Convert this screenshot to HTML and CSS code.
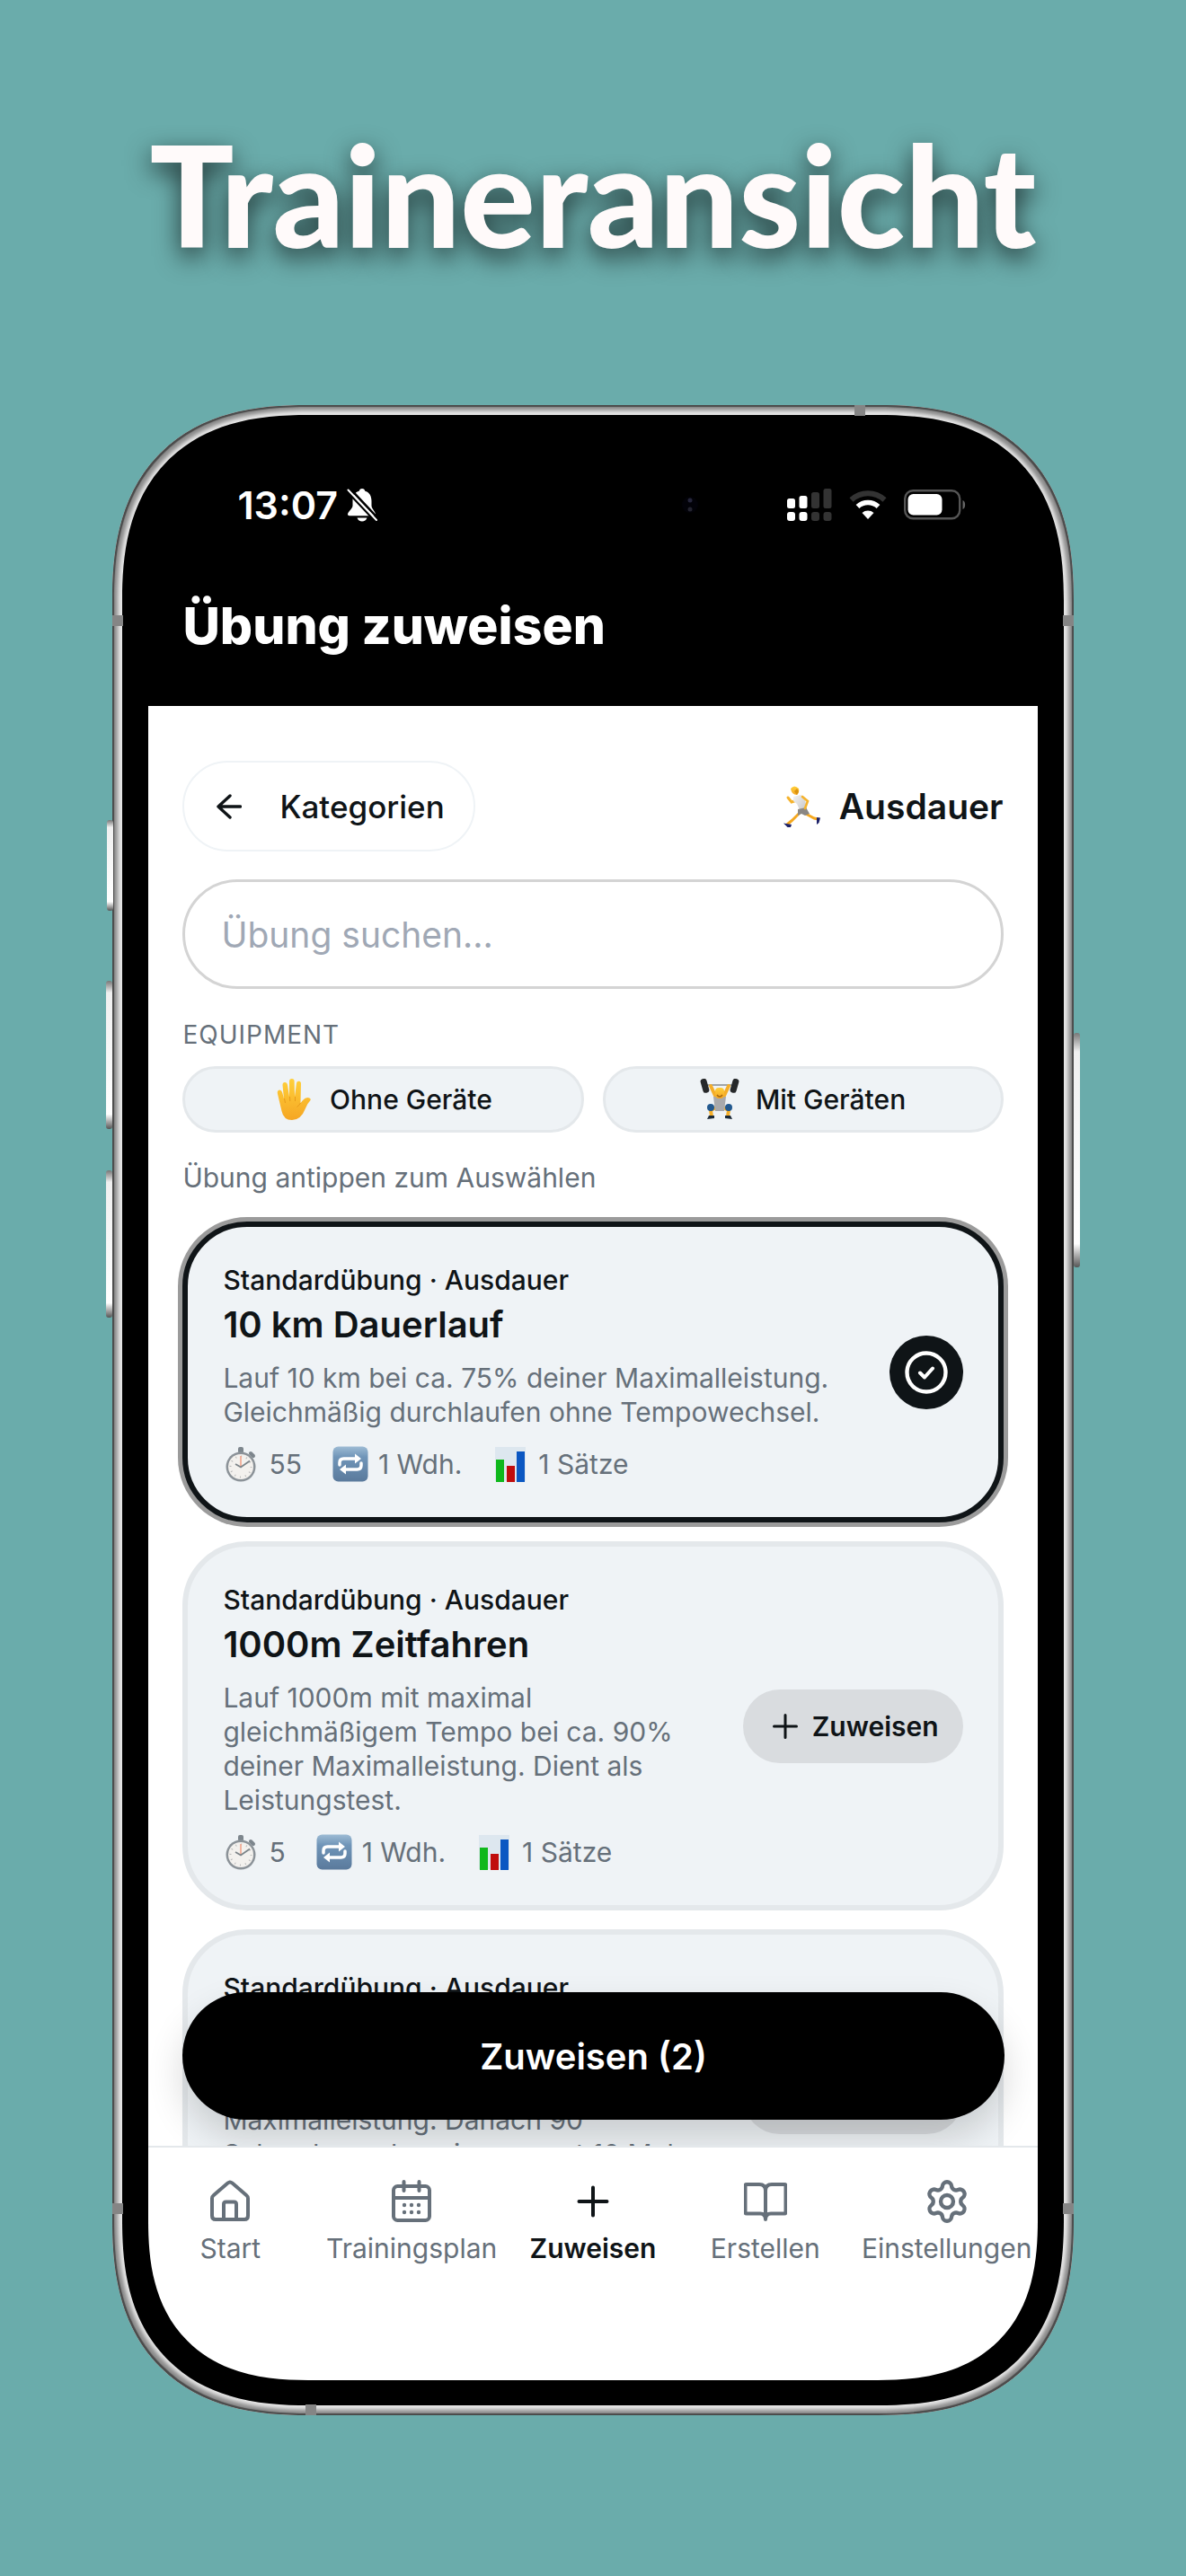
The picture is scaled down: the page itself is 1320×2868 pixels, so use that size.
FILE: index.html
```html
<!DOCTYPE html>
<html lang="de">
<head>
    <meta charset="UTF-8">
    <meta name="viewport" content="width=device-width, initial-scale=1.0">
    <title>Traineransicht</title>
    <link rel="stylesheet" href="styles.css">
</head>
<body>
    <!-- shared icons -->
    <svg class="sprite" aria-hidden="true">
        <defs>
            <linearGradient id="skin" x1="0" y1="0" x2="0" y2="1">
                <stop offset="0" stop-color="#ffd03a"/>
                <stop offset="1" stop-color="#f5a623"/>
            </linearGradient>
            <linearGradient id="blueTile" x1="0" y1="0" x2="0" y2="1">
                <stop offset="0" stop-color="#9dbbd4"/>
                <stop offset="0.3" stop-color="#7095b8"/>
                <stop offset="1" stop-color="#5a7a9c"/>
            </linearGradient>
            <linearGradient id="shirt" x1="0" y1="0" x2="1" y2="1">
                <stop offset="0" stop-color="#f2f2f2"/>
                <stop offset="1" stop-color="#c4c4c6"/>
            </linearGradient>
        </defs>
        <symbol id="stopwatch" viewBox="0 0 40 40">
            <rect x="17" y="1" width="6" height="7" rx="2" fill="#7d868d"/>
            <path d="M31 8l3 3" stroke="#7d868d" stroke-width="4" stroke-linecap="round"/>
            <circle cx="20" cy="23" r="16.5" fill="#8b9298"/>
            <circle cx="20" cy="23" r="14" fill="#f3f1ee"/>
            <circle cx="20" cy="23" r="11.5" fill="none" stroke="#b9b9b9" stroke-width="2" stroke-dasharray="1 5"/>
            <path d="M20 24V11" stroke="#f0a58c" stroke-width="1.6"/>
            <path d="M14 20l6 3.500 10-7" fill="none" stroke="#7c8488" stroke-width="1.800"/>
        </symbol>
        <symbol id="repeat" viewBox="0 0 40 40">
            <rect x="0.500" y="0.500" width="39" height="39" rx="6" fill="url(#blueTile)"/>
            <path d="M8 21v-2.500q0-4.500 4.500-4.500H27" fill="none" stroke="#fff" stroke-width="3.500" stroke-linecap="round"/>
            <path d="M32 19v2.500q0 4.500-4.500 4.500H13" fill="none" stroke="#fff" stroke-width="3.500" stroke-linecap="round"/>
            <path d="M25 8.500l7 5.500-7 5.500zM15 20.500L8 26l7 5.500z" fill="#fff"/>
        </symbol>
        <symbol id="chart" viewBox="0 0 40 40">
            <rect x="3" y="1" width="34" height="38" fill="#dde7ef"/>
            <rect x="4" y="15" width="9" height="25" fill="#0fb81c"/>
            <rect x="16" y="22" width="9" height="18" fill="#c00d0d"/>
            <rect x="27" y="6" width="9" height="34" fill="#0b57c2"/>
        </symbol>
        <symbol id="plus" viewBox="0 0 24 24">
            <path d="M12 4.500v15M4.500 12h15" fill="none" stroke="currentColor" stroke-width="1.800" stroke-linecap="round"/>
        </symbol>
    </svg>

    <h1 class="headline">Traineransicht</h1>

    <div class="phone">
        <span class="side-button action"></span>
        <span class="side-button volume-up"></span>
        <span class="side-button volume-down"></span>
        <span class="side-button power"></span>
        <span class="antenna top"></span>
        <span class="antenna bottom"></span>
        <span class="antenna left-upper"></span>
        <span class="antenna left-lower"></span>
        <span class="antenna right-upper"></span>
        <span class="antenna right-lower"></span>

        <div class="bezel">
            <div class="screen">
                <div class="status-bar">
                    <div class="status-left">
                        <span class="time">13:07</span>
                        <svg class="bell" viewBox="0 0 34 38">
                            <path d="M17 1c-2 0-3 1.200-3 2.500C9 5 6.500 9 6.500 15v5c0 3-5.500 7-5.500 9.500 0 1 .8 1.700 2 1.700h27c1.200 0 2-.7 2-1.700 0-2.500-4.500-6.500-4.500-9.500v-5c0-6-2.500-10-7.500-11.500C20 2.200 19 1 17 1zM11.500 33.500c.8 2.500 3 4 5.500 4s4.700-1.500 5.500-4z" fill="#fff"/>
                            <path d="M3.500 1L35 34.500M0 3.500L31.500 37" stroke="#000" stroke-width="2.600"/>
                            <path d="M1.500 2.500L33 36" stroke="#fff" stroke-width="2" stroke-linecap="round"/>
                        </svg>
                    </div>
                    <div class="status-right">
                        <svg class="camera" viewBox="0 0 20 30">
                            <circle cx="10" cy="15" r="9" fill="#020208"/>
                            <circle cx="10" cy="10" r="2.500" fill="#25253a"/>
                            <circle cx="10" cy="20" r="2.500" fill="#23232f"/>
                        </svg>
                        <svg class="signal" viewBox="0 0 50 36">
                            <g fill="#fff">
                                <rect x="0" y="11" width="9" height="11" rx="2.500"/>
                                <rect x="13.500" y="8" width="9" height="14" rx="2.500"/>
                                <rect x="0" y="26" width="9" height="10" rx="3"/>
                                <rect x="13.500" y="26" width="9" height="10" rx="3"/>
                            </g>
                            <g fill="#333">
                                <rect x="27" y="4" width="9" height="18" rx="2.500"/>
                                <rect x="40.500" y="0" width="9" height="22" rx="2.500"/>
                                <rect x="27" y="26" width="9" height="10" rx="3"/>
                                <rect x="40.500" y="26" width="9" height="10" rx="3"/>
                            </g>
                        </svg>
                        <svg class="wifi" viewBox="0 0 42 32">
                            <path d="M2.500 10.500a27 27 0 0 1 37 0" fill="none" stroke="#333" stroke-width="6"/>
                            <path d="M9.500 18a17 17 0 0 1 23 0" fill="none" stroke="#fff" stroke-width="5.500"/>
                            <path d="M21 32l-6.500-7a10 10 0 0 1 13 0z" fill="#fff"/>
                        </svg>
                        <svg class="battery" viewBox="0 0 70 34">
                            <rect x="1.200" y="1.200" width="61" height="31" rx="9" fill="none" stroke="#555" stroke-width="2.400"/>
                            <rect x="4.500" y="5" width="38" height="23.500" rx="6" fill="#fff"/>
                            <path d="M65.500 12c3.500 1 3.500 9 0 10z" fill="#666"/>
                        </svg>
                    </div>
                </div>

                <header class="app-header">
                    <h2>Übung zuweisen</h2>
                </header>

                <main class="content">
                    <div class="category-row">
                        <button class="back-button" type="button">
                            <svg class="arrow" viewBox="0 0 28 28">
                                <path d="M15 2L2 14l13 12M2 14h24.500" fill="none" stroke="currentColor" stroke-width="3.400" stroke-linecap="round" stroke-linejoin="round"/>
                            </svg>
                            Kategorien
                        </button>
                        <div class="category">
                            <svg class="runner" viewBox="0 0 42 46">
                                <path d="M19 30l-8 8-6 5M24 30l11 6 5 1" fill="none" stroke="#f5a81f" stroke-width="3" stroke-linejoin="round"/>
                                <path d="M13 17l-3 1-4-5" fill="none" stroke="#f5b32d" stroke-width="3" stroke-linecap="round"/>
                                <path d="M12 12l8-2q5 3 6 10l1 8-7 1-4-9-4-3z" fill="url(#shirt)"/>
                                <path d="M17 26l9-2 4 7-5 2-4-2-4 2z" fill="#8a8784"/>
                                <path d="M22 12l6 5-3 8" fill="none" stroke="#f5b32d" stroke-width="2.600" stroke-linecap="round"/>
                                <path d="M9 3q4-5 9 0 1 5-2 7-6 0-7-7z" fill="url(#skin)"/>
                                <path d="M13 6l3-3 2 3-2 4z" fill="#d9920f"/>
                                <path d="M1 41.500l9 1.500-1 3H5.500z" fill="#1d2269"/>
                                <path d="M38 35l4 .5-1.500 5.500-2.500 2z" fill="#1d2269"/>
                            </svg>
                            <span>Ausdauer</span>
                        </div>
                    </div>

                    <input class="search" type="text" placeholder="Übung suchen..." aria-label="Übung suchen">

                    <p class="section-label">Equipment</p>

                    <div class="chips">
                        <button class="chip" type="button">
                            <svg class="emoji" viewBox="0 0 44 46">
                                <path d="M4 17q-1-4 2-4.500 2.500 0 3.500 4l1.500 6L9.500 7q0-3 2.500-3t3 3l2 13V3q0-3 2.800-3t2.800 3l.4 17L25 5q.3-2.500 2.700-2.300 2.500.3 2.300 3L29.500 27q1-1 2.500-3 3.500-4 7.500-2.500 2 1 1 2.500-3 3-5.500 9-5 13-15 13-9.500 0-11.500-10z" fill="url(#skin)"/>
                                <path d="M11.500 22l1 5M17.500 20l.3 5M23.500 20v5M29.500 27q-1.500 2.500-4 4.500" fill="none" stroke="#e79a1c" stroke-width="1"/>
                            </svg>
                            Ohne Geräte
                        </button>
                        <button class="chip" type="button">
                            <svg class="emoji" viewBox="0 0 44 46">
                                <path d="M6 7h32" stroke="#a0a5a8" stroke-width="2"/>
                                <path d="M12 8l6 13M32 8l-6 13" stroke="#f5ae28" stroke-width="4" stroke-linecap="round"/>
                                <rect x="2" y="0" width="7" height="16" rx="3" transform="rotate(-16 5 8)" fill="#26282a"/>
                                <rect x="35" y="0" width="7" height="16" rx="3" transform="rotate(16 39 8)" fill="#26282a"/>
                                <path d="M18 32l-6 3 1 7M26 32l6 3-1 7" fill="none" stroke="#f5ae28" stroke-width="4"/>
                                <path d="M15 20h14l-2 16H17z" fill="#a9a9ab"/>
                                <rect x="17" y="10" width="10" height="12" rx="4" fill="url(#skin)"/>
                                <path d="M19 18q3 4 6 0" fill="none" stroke="#a8690c" stroke-width="1.500"/>
                                <circle cx="12" cy="32" r="4" fill="#23598f"/>
                                <circle cx="32" cy="32" r="4" fill="#23598f"/>
                                <path d="M8 45l2-4h6v3zM36 45l-2-4h-6v3z" fill="#1c2a38"/>
                            </svg>
                            Mit Geräten
                        </button>
                    </div>

                    <p class="hint">Übung antippen zum Auswählen</p>

                    <div class="exercise-list">
                        <article class="card selected">
                            <div class="card-body">
                                <p class="card-type">Standardübung · Ausdauer</p>
                                <h3>10 km Dauerlauf</h3>
                                <p class="card-text">Lauf 10 km bei ca. 75% deiner Maximalleistung. Gleichmäßig durchlaufen ohne Tempowechsel.</p>
                                <div class="meta">
                                    <span><svg><use href="#stopwatch"/></svg>55</span>
                                    <span><svg><use href="#repeat"/></svg>1 Wdh.</span>
                                    <span><svg><use href="#chart"/></svg>1 Sätze</span>
                                </div>
                            </div>
                            <button class="check" type="button" aria-label="Ausgewählt">
                                <svg viewBox="0 0 48 48">
                                    <circle cx="24" cy="24" r="21.500" fill="none" stroke="#fff" stroke-width="4.400"/>
                                    <path d="M17 24.500l5 5 9-10" fill="none" stroke="#fff" stroke-width="4" stroke-linecap="round" stroke-linejoin="round"/>
                                </svg>
                            </button>
                        </article>

                        <article class="card">
                            <div class="card-body">
                                <p class="card-type">Standardübung · Ausdauer</p>
                                <h3>1000m Zeitfahren</h3>
                                <p class="card-text">Lauf 1000m mit maximal gleichmäßigem Tempo bei ca. 90% deiner Maximalleistung. Dient als Leistungstest.</p>
                                <div class="meta">
                                    <span><svg><use href="#stopwatch"/></svg>5</span>
                                    <span><svg><use href="#repeat"/></svg>1 Wdh.</span>
                                    <span><svg><use href="#chart"/></svg>1 Sätze</span>
                                </div>
                            </div>
                            <button class="assign" type="button"><svg><use href="#plus"/></svg>Zuweisen</button>
                        </article>

                        <article class="card">
                            <div class="card-body">
                                <p class="card-type">Standardübung · Ausdauer</p>
                                <h3>Intervalllauf</h3>
                                <p class="card-text">Lauf 30 Sekunden mit 90%<br>Maximalleistung. Danach 90<br>Sekunden gehen, insgesamt 10 Mal</p>
                                <div class="meta">
                                    <span><svg><use href="#stopwatch"/></svg>20</span>
                                    <span><svg><use href="#repeat"/></svg>10 Wdh.</span>
                                    <span><svg><use href="#chart"/></svg>1 Sätze</span>
                                </div>
                            </div>
                            <button class="assign" type="button"><svg><use href="#plus"/></svg>Zuweisen</button>
                        </article>
                    </div>

                    <button class="submit" type="button">Zuweisen (2)</button>
                </main>

                <nav class="tab-bar">
                    <a href="#">
                        <svg viewBox="0 0 48 48">
                            <path d="M4 20.500q0-2 1.600-3.300L21.500 3.500q2.500-2 5 0l15.900 13.700Q44 18.500 44 20.500V40q0 4-4 4H8q-4 0-4-4z"/>
                            <path d="M17 44V27q0-2.500 2.500-2.500h9q2.500 0 2.500 2.500v17"/>
                        </svg>
                        Start
                    </a>
                    <a href="#">
                        <svg viewBox="0 0 48 48">
                            <rect x="4" y="7" width="40" height="38" rx="4.500"/>
                            <path d="M4 20h40M15.500 2v10M32.500 2v10"/>
                            <g class="dots"><circle cx="16" cy="28" r="2.200"/><circle cx="24" cy="28" r="2.200"/><circle cx="32" cy="28" r="2.200"/><circle cx="16" cy="36" r="2.200"/><circle cx="24" cy="36" r="2.200"/><circle cx="32" cy="36" r="2.200"/></g>
                        </svg>
                        Trainingsplan
                    </a>
                    <a href="#" class="active">
                        <svg viewBox="0 0 48 48">
                            <path d="M24 8.500v31M8.500 24h31"/>
                        </svg>
                        Zuweisen
                    </a>
                    <a href="#">
                        <svg viewBox="0 0 48 48">
                            <path d="M24 12q0-7 7-7h14q1.500 0 1.500 1.500V36q0 1.500-1.500 1.500H30q-6 0-6 6.500 0-6.500-6-6.500H3Q1.500 37.500 1.500 36V6.500Q1.500 5 3 5h14q7 0 7 7zM24 12v32"/>
                        </svg>
                        Erstellen
                    </a>
                    <a href="#">
                        <svg viewBox="1 1 22 22" class="gear">
                            <path d="M9.671 4.136a2.340 2.340 0 0 1 4.659 0 2.340 2.340 0 0 0 3.319 1.915 2.340 2.340 0 0 1 2.330 4.033 2.340 2.340 0 0 0 0 3.831 2.340 2.340 0 0 1-2.330 4.033 2.340 2.340 0 0 0-3.319 1.915 2.340 2.340 0 0 1-4.659 0 2.340 2.340 0 0 0-3.320-1.915 2.340 2.340 0 0 1-2.330-4.033 2.340 2.340 0 0 0 0-3.831A2.340 2.340 0 0 1 6.350 6.051a2.340 2.340 0 0 0 3.319-1.915"/>
                            <circle cx="12" cy="12" r="3.200"/>
                        </svg>
                        Einstellungen
                    </a>
                </nav>
            </div>
        </div>
    </div>
</body>
</html>
```
FILE: styles.css
```css
* {
    box-sizing: border-box;
}
body {
    margin: 0;
    background-color: #6aacab;
    font-family: Inter, "Liberation Sans", sans-serif;
    color: #0f1417;
}
h1, h2, h3, p {
    margin: 0;
}
svg {
    display: block;
    flex-shrink: 0;
}
button {
    font-family: inherit;
    color: inherit;
    border: none;
    cursor: pointer;
}
.sprite {
    position: absolute;
    width: 0;
    height: 0;
}
.headline {
    padding-top: 126px;
    font-family: Lato, sans-serif;
    font-size: 156px;
    font-weight: 900;
    line-height: 180px;
    text-align: center;
    color: #fffafa;
    text-shadow: 0 10px 28px rgba(0, 0, 0, 0.7);
}

/* phone body */
.phone {
    position: relative;
    width: 81%;
    aspect-ratio: 1069 / 2238;
    margin: 145px auto 0;
    padding: 11px;
    border-radius: 186px;
    background-color: #d8d8d8;
    box-shadow: inset 0 0 1px 2px #4a4a4a, inset 0 0 4px 6px #8c8c8c, inset 0 0 0 11px #e6e6e6;
}
.bezel {
    height: 100%;
    padding: 28px 29px;
    border-radius: 176px;
    background-color: #000;
}
.screen {
    display: flex;
    flex-direction: column;
    height: 100%;
    border-radius: 148px;
    overflow: hidden;
}
/* smoother corners where the browser can draw them */
@supports (corner-shape: superellipse(1.3)) {
    .phone, .bezel, .screen {
        corner-shape: superellipse(1.3);
    }
    .phone {
        border-radius: 218px;
    }
    .bezel {
        border-radius: 207px;
    }
    .screen {
        border-radius: 178px;
    }
}
.side-button {
    position: absolute;
    width: 7px;
    border-radius: 3px;
    background: linear-gradient(#777, #f0f0f0 8%, #fff 90%, #555);
}
.side-button.action {
    top: 462px;
    left: -6px;
    height: 101px;
}
.side-button.volume-up {
    top: 641px;
    left: -7px;
    height: 165px;
}
.side-button.volume-down {
    top: 852px;
    left: -7px;
    height: 164px;
}
.side-button.power {
    top: 699px;
    right: -7px;
    height: 261px;
}
.antenna {
    position: absolute;
    width: 12px;
    height: 12px;
    background-color: #858585;
}
.antenna.top {
    top: 0;
    left: 826px;
}
.antenna.bottom {
    bottom: 0;
    left: 215px;
}
.antenna.left-upper {
    top: 234px;
    left: 0;
}
.antenna.left-lower {
    top: 2002px;
    left: 0;
}
.antenna.right-upper {
    top: 234px;
    right: 0;
}
.antenna.right-lower {
    top: 2002px;
    right: 0;
}

/* status bar */
.status-bar {
    display: flex;
    align-items: center;
    justify-content: space-between;
    height: 144px;
    padding: 0 79px 0 99px;
    color: #fff;
}
.status-left, .status-right {
    display: flex;
    align-items: center;
}
.time {
    font-size: 43px;
    font-weight: 600;
}
.bell {
    width: 34px;
    height: 38px;
    margin-left: 10px;
}
.camera {
    width: 20px;
    height: 30px;
    margin-right: 98px;
}
.signal {
    width: 50px;
    height: 36px;
}
.wifi {
    width: 42px;
    height: 32px;
    margin: 0 19px;
}
.battery {
    width: 70px;
    height: 34px;
}
.app-header {
    padding: 29px 38px 55px;
    color: #fff;
}
.app-header h2 {
    font-size: 57px;
    font-weight: 800;
    line-height: 68px;
}

/* content */
.content {
    position: relative;
    flex: 1;
    min-height: 0;
    padding: 61px 38px 0;
    overflow: hidden;
    background-color: #fff;
}
.category-row {
    display: flex;
    align-items: center;
    justify-content: space-between;
}
.back-button {
    display: flex;
    align-items: center;
    gap: 42px;
    height: 101px;
    padding: 0 32px 0 36px;
    border: 2px solid #eff3f6;
    border-radius: 51px;
    background-color: #fff;
    font-size: 35px;
    font-weight: 500;
}
.arrow {
    width: 28px;
    height: 28px;
}
.category {
    display: flex;
    align-items: center;
    gap: 21px;
    font-size: 39px;
    font-weight: 600;
}
.runner {
    width: 42px;
    height: 46px;
}
.search {
    display: block;
    width: 100%;
    height: 122px;
    margin-top: 31px;
    padding: 0 40px;
    border: 3px solid #d4d4d4;
    border-radius: 61px;
    font-family: inherit;
    font-size: 39px;
    outline: none;
}
.search::placeholder {
    color: #a0a8b5;
    opacity: 1;
}
.section-label {
    margin-top: 32px;
    font-size: 28px;
    line-height: 38px;
    letter-spacing: 1px;
    text-transform: uppercase;
    color: #66707a;
}
.chips {
    display: grid;
    grid-template-columns: 1fr 1fr;
    gap: 21px;
    margin-top: 16px;
}
.chip {
    display: flex;
    align-items: center;
    justify-content: center;
    gap: 18px;
    height: 74px;
    padding: 0;
    border: 3px solid #e4e8eb;
    border-radius: 37px;
    background-color: #eff3f6;
    font-size: 30px;
    font-weight: 500;
}
.emoji {
    width: 44px;
    height: 46px;
}
.hint {
    margin-top: 30px;
    font-size: 30px;
    line-height: 40px;
    color: #66707a;
}

/* exercise cards */
.exercise-list {
    display: flex;
    flex-direction: column;
    gap: 21px;
    margin-top: 29px;
}
.card {
    display: flex;
    align-items: center;
    justify-content: space-between;
    gap: 20px;
    padding: 39px;
    border: 6px solid #e4e8eb;
    border-radius: 72px;
    background-color: #eff3f6;
}
.card.selected {
    border-color: #0f1417;
    box-shadow: 0 0 0 5px #9b9b9b;
}
.card-type {
    font-size: 30px;
    font-weight: 500;
    line-height: 40px;
}
.card h3 {
    margin-top: 5px;
    font-size: 40px;
    font-weight: 600;
    line-height: 50px;
}
.card-text {
    margin-top: 15px;
    font-size: 30px;
    line-height: 38px;
    color: #66707a;
}
.meta {
    display: flex;
    gap: 34px;
    margin-top: 19px;
    font-size: 30px;
    line-height: 40px;
    color: #66707a;
}
.meta span {
    display: flex;
    align-items: center;
    gap: 11px;
}
.meta svg {
    width: 40px;
    height: 40px;
}
.check {
    display: flex;
    flex-shrink: 0;
    align-items: center;
    justify-content: center;
    width: 82px;
    height: 82px;
    padding: 0;
    border-radius: 50%;
    background-color: #0f1417;
}
.check svg {
    width: 48px;
    height: 48px;
}
.assign {
    display: flex;
    flex-shrink: 0;
    align-items: center;
    gap: 10px;
    height: 82px;
    padding: 0 27px;
    border-radius: 41px;
    background-color: #d9dcdf;
    font-size: 30px;
    font-weight: 600;
}
.assign svg {
    width: 40px;
    height: 40px;
}
.submit {
    position: absolute;
    right: 37px;
    bottom: 29px;
    left: 38px;
    height: 142px;
    border-radius: 71px;
    background-color: #000;
    box-shadow: 0 20px 40px rgba(0, 0, 0, 0.16);
    color: #fff;
    font-size: 40px;
    font-weight: 600;
}

/* bottom navigation */
.tab-bar {
    display: grid;
    grid-template-columns: 18fr 22fr 18fr 20fr 20fr;
    height: 261px;
    padding-top: 36px;
    border-top: 2px solid #e4e8eb;
    background-color: #fff;
}
.tab-bar a {
    display: flex;
    flex-direction: column;
    align-items: center;
    gap: 8px;
    font-size: 30px;
    line-height: 40px;
    text-decoration: none;
    color: #66707a;
}
.tab-bar a.active {
    font-weight: 600;
    color: #0f1417;
}
.tab-bar svg {
    width: 48px;
    height: 48px;
    fill: none;
    stroke: currentColor;
    stroke-width: 4;
    stroke-linecap: round;
    stroke-linejoin: round;
}
.tab-bar .dots {
    fill: currentColor;
    stroke: none;
}
.tab-bar .gear {
    stroke-width: 2;
}
```
